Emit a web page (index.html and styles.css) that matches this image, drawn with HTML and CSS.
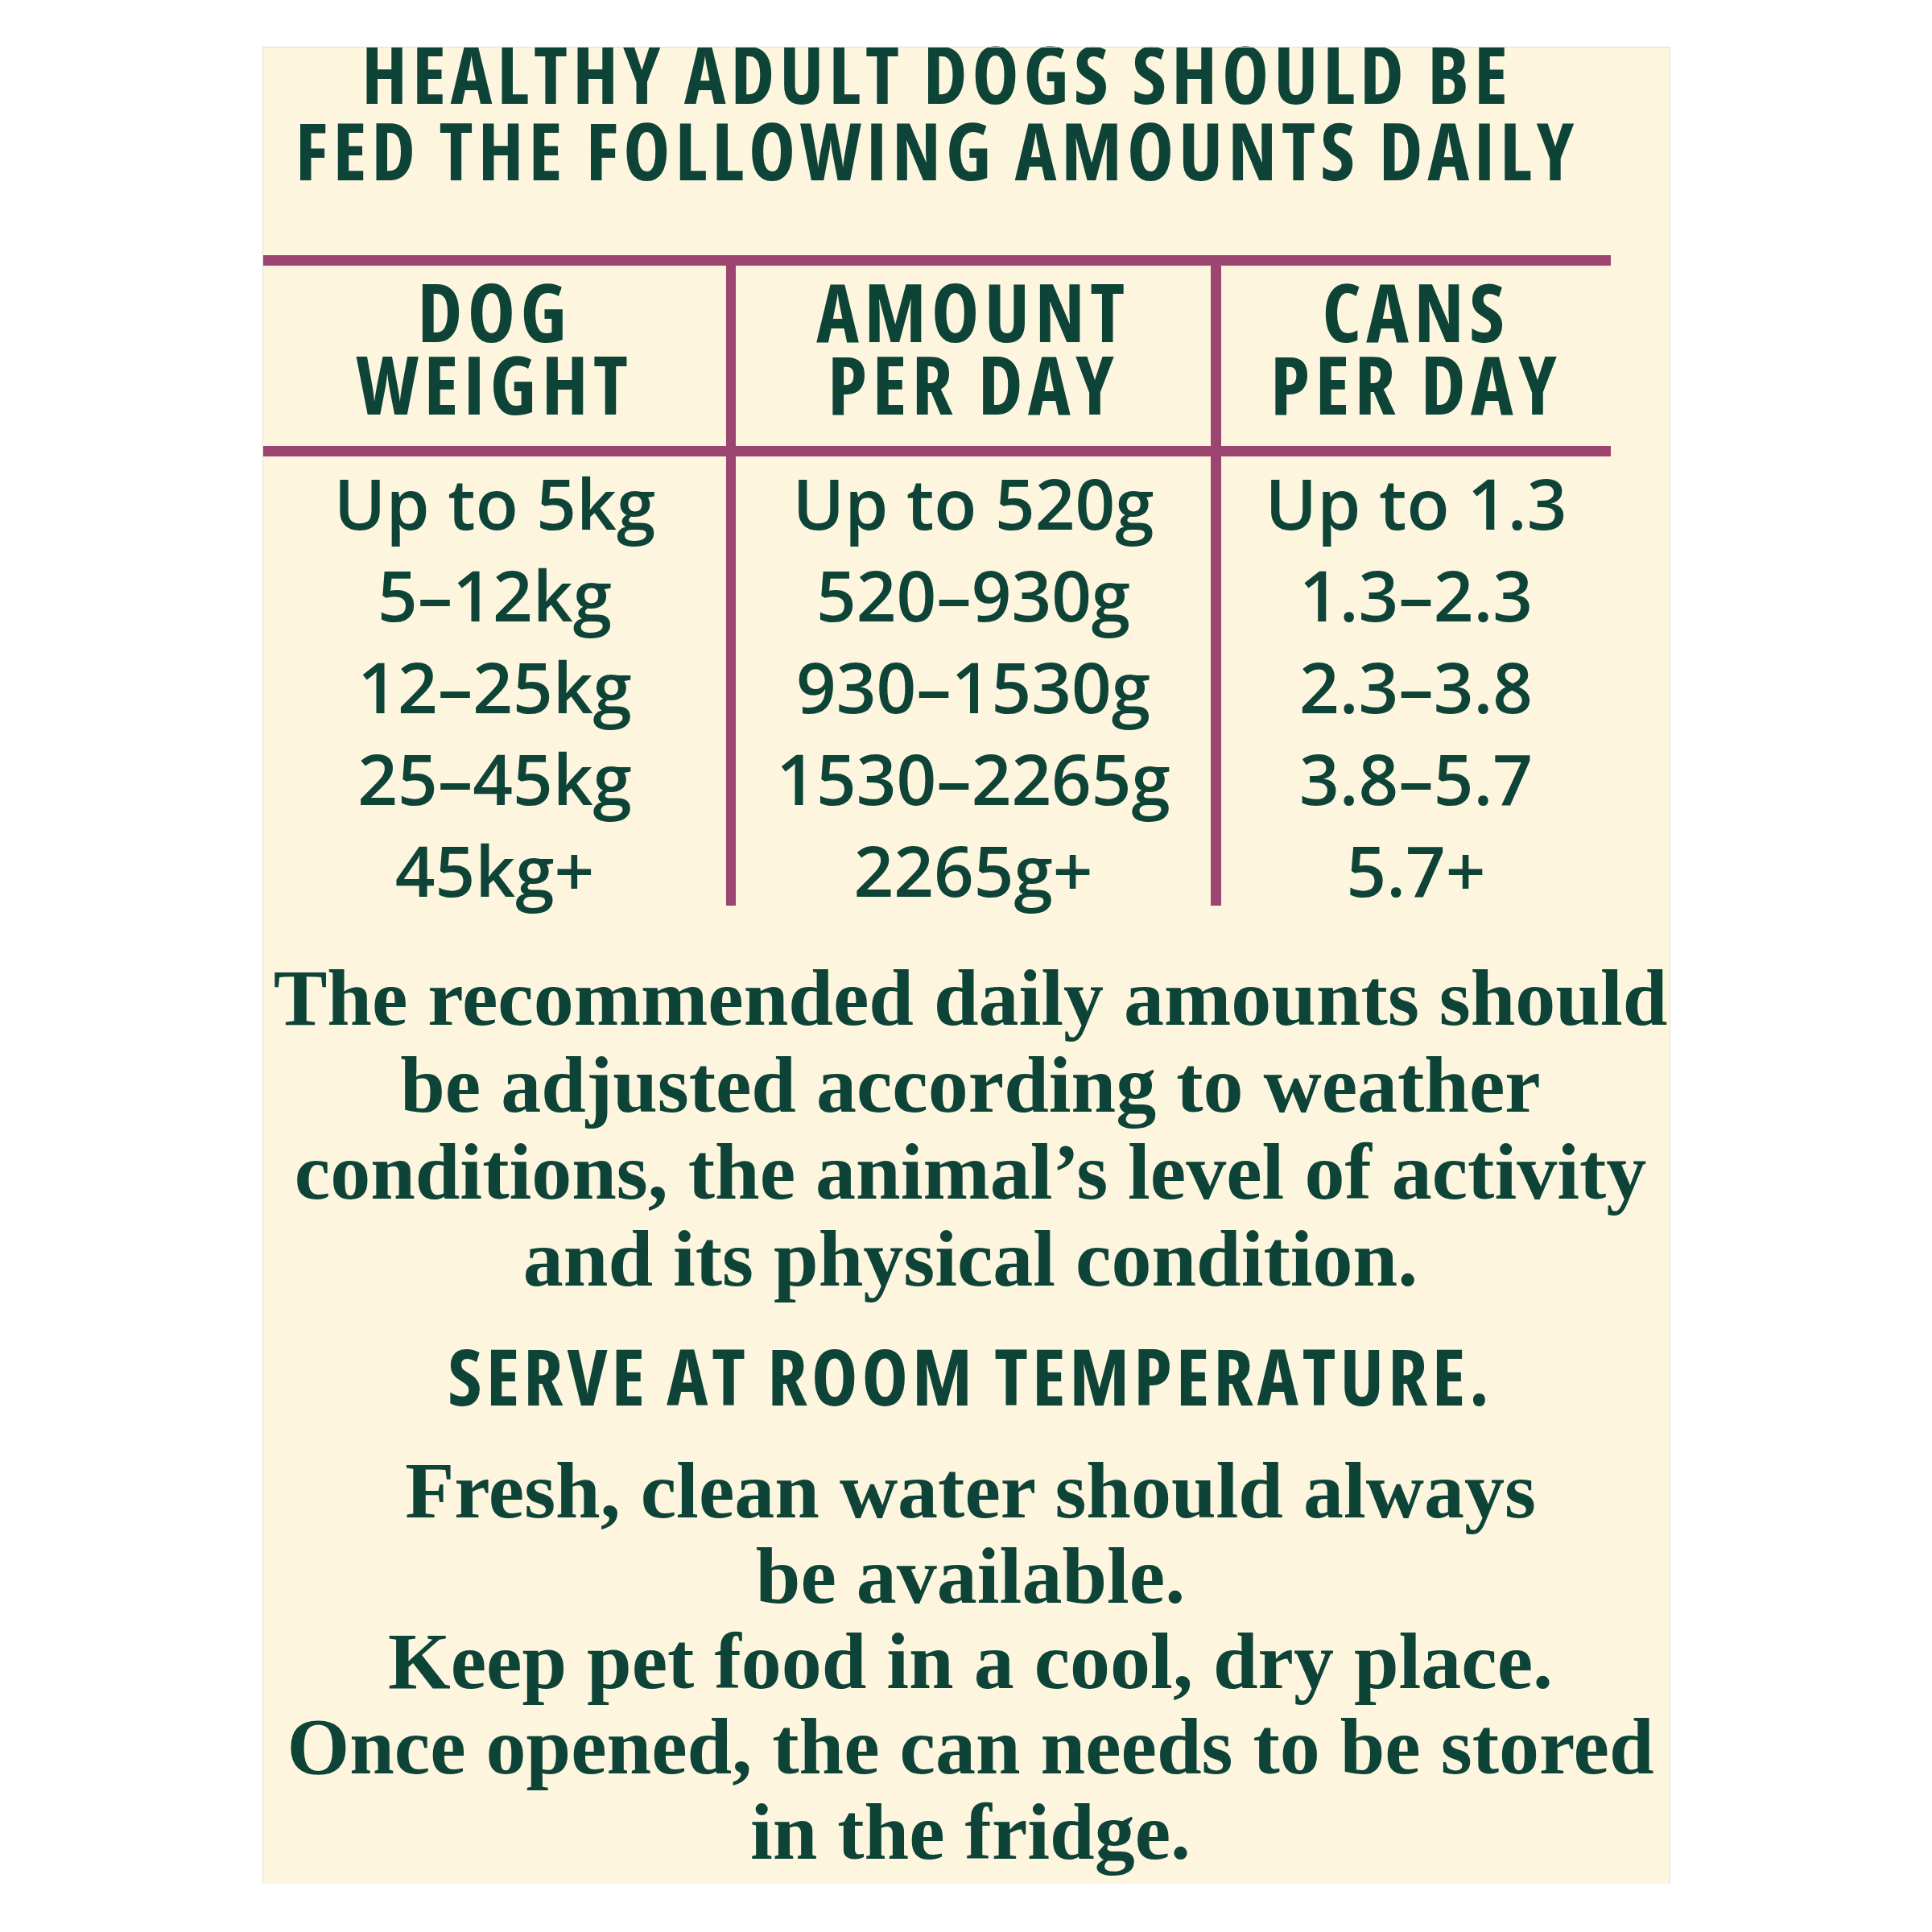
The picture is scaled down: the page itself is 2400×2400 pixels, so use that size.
FILE: index.html
```html
<!DOCTYPE html>
<html lang="en">
<head>
<meta charset="utf-8">
<title>Feeding guide</title>
<link rel="stylesheet" href="styles.css">
</head>
<body>
<div class="panel">
  <h1 class="heading">HEALTHY ADULT DOGS SHOULD BE<br>FED THE FOLLOWING AMOUNTS DAILY</h1>
  <div class="table">
    <div class="thead">
      <div class="th">DOG<br>WEIGHT</div>
      <div class="th">AMOUNT<br>PER DAY</div>
      <div class="th">CANS<br>PER DAY</div>
    </div>
    <div class="tbody">
      <div class="td">
        <div>Up to 5kg</div>
        <div>5–12kg</div>
        <div>12–25kg</div>
        <div>25–45kg</div>
        <div>45kg+</div>
      </div>
      <div class="td">
        <div>Up to 520g</div>
        <div>520–930g</div>
        <div>930–1530g</div>
        <div>1530–2265g</div>
        <div>2265g+</div>
      </div>
      <div class="td">
        <div>Up to 1.3</div>
        <div>1.3–2.3</div>
        <div>2.3–3.8</div>
        <div>3.8–5.7</div>
        <div>5.7+</div>
      </div>
    </div>
  </div>
  <p class="note">The recommended daily amounts should<br>be adjusted according to weather<br>conditions, the animal’s level of activity<br>and its physical condition.</p>
  <p class="serve">SERVE AT ROOM TEMPERATURE.</p>
  <p class="note note-last">Fresh, clean water should always<br>be available.<br>Keep pet food in a cool, dry place.<br>Once opened, the can needs to be stored<br>in the fridge.</p>
</div>
</body>
</html>
```
FILE: styles.css
```css
body {
  margin: 0;
  background: #ffffff;
}

.panel {
  display: flow-root;
  margin: 59px 0 0 327px;
  width: 1747px;
  height: 2281px;
  background: #fdf5de;
  outline: 1px solid #e3e0d4;
  color: #0d4437;
}

.heading {
  width: 1674px;
  margin: -15px 0 0 0;
  font-family: "Open Sans", sans-serif;
  font-weight: 700;
  font-stretch: 75%;
  font-size: 98px;
  line-height: 95px;
  letter-spacing: 6px;
  text-align: center;
  white-space: nowrap;
}

.table {
  width: 1674px;
  margin-top: 83px;
  border-top: 13px solid #9d4571;
}

.thead,
.tbody {
  display: grid;
  grid-template-columns: 587px 603px 484px;
}

.thead {
  border-bottom: 13px solid #9d4571;
}

.th {
  box-sizing: border-box;
  height: 224px;
  padding-top: 11px;
  font-family: "Open Sans", sans-serif;
  font-weight: 700;
  font-stretch: 75%;
  font-size: 100px;
  line-height: 90px;
  letter-spacing: 6.5px;
  text-align: center;
  white-space: nowrap;
}

.td {
  box-sizing: border-box;
  height: 558px;
  font-family: "Open Sans", sans-serif;
  font-weight: 600;
  font-size: 87px;
  line-height: 114px;
  text-align: center;
  white-space: nowrap;
}

.th:nth-child(1),
.td:nth-child(1) {
  border-right: 12px solid #9d4571;
}

.th:nth-child(2),
.td:nth-child(2) {
  border-right: 13px solid #9d4571;
}

.note {
  margin: 61px 0 0 0;
  padding-left: 10px;
  font-family: "Liberation Serif", serif;
  font-weight: 700;
  font-size: 100px;
  line-height: 108px;
  text-align: center;
  white-space: nowrap;
}

.serve {
  margin: 40px 0 0 0;
  padding-left: 10px;
  font-family: "Open Sans", sans-serif;
  font-weight: 700;
  font-stretch: 75%;
  font-size: 97px;
  line-height: 100px;
  letter-spacing: 5px;
  text-align: center;
  white-space: nowrap;
}

.note-last {
  margin-top: 41px;
  line-height: 106px;
}
```
